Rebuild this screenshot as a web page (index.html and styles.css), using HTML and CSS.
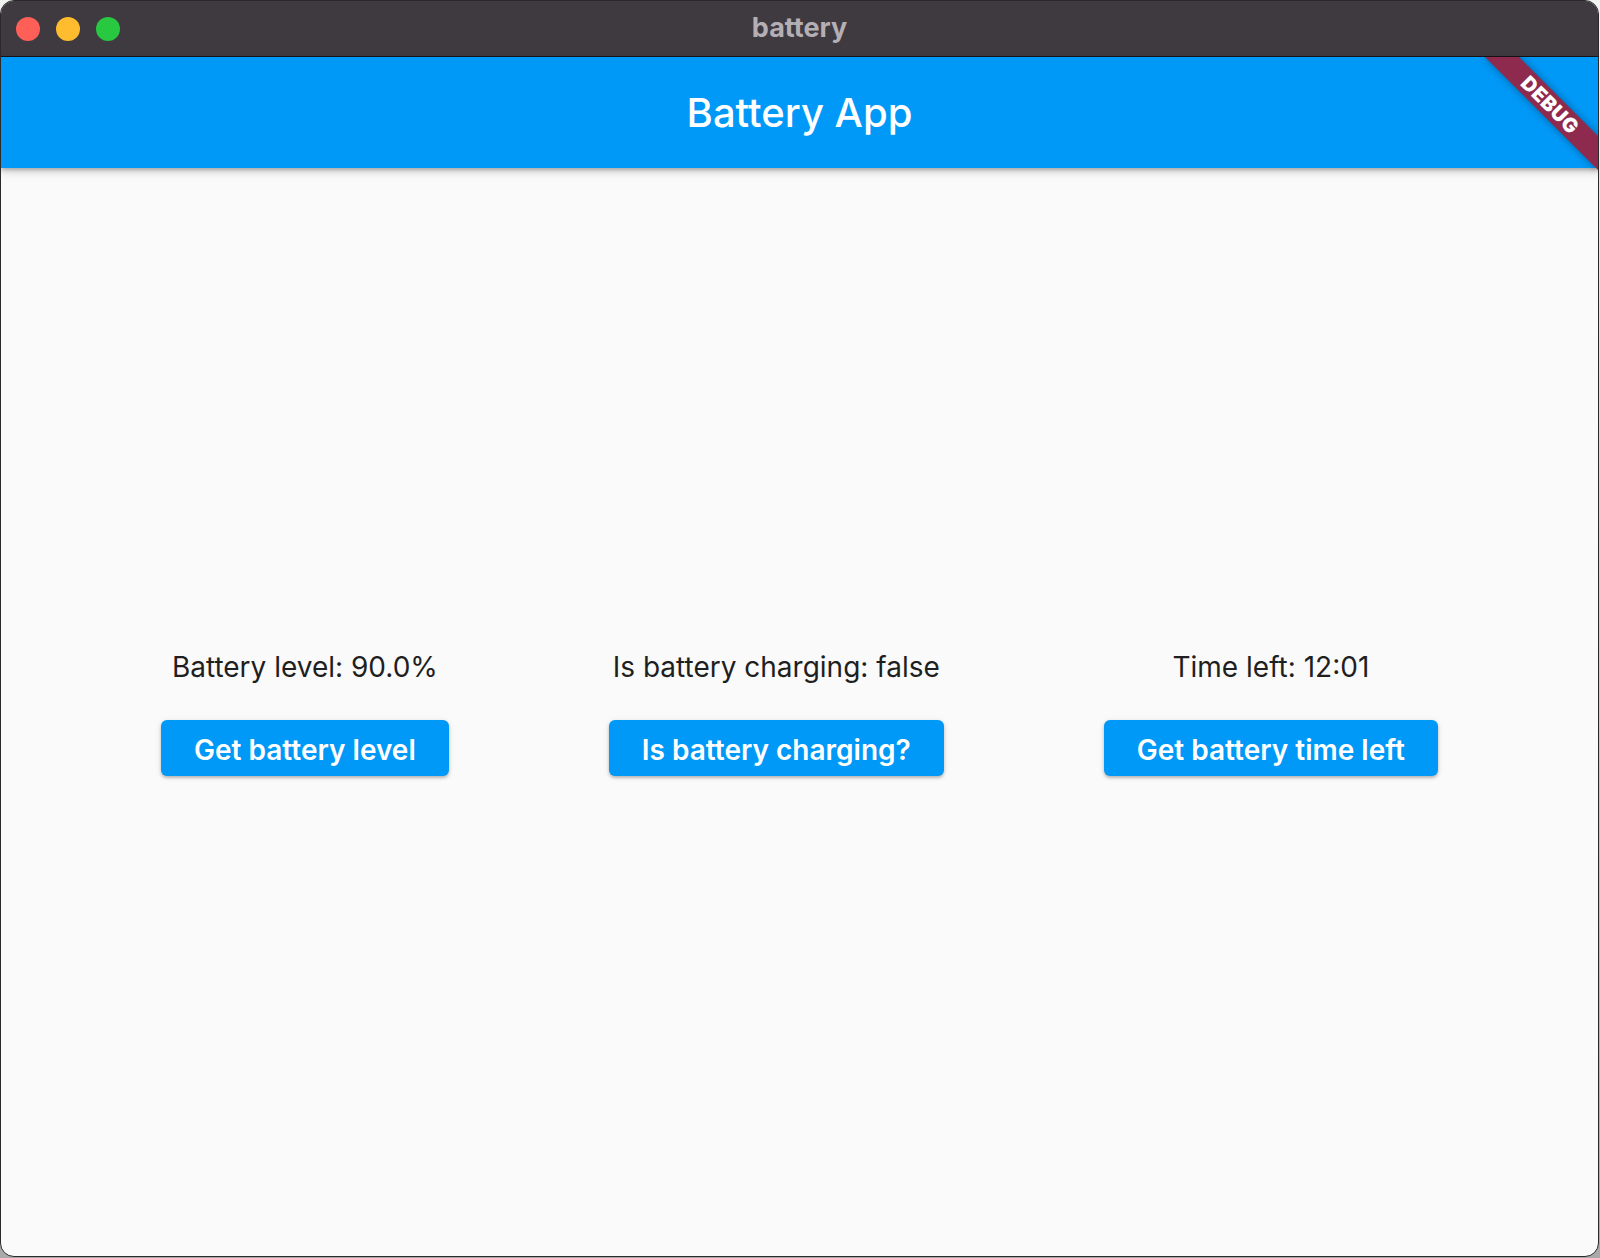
FILE: index.html
```html
<!DOCTYPE html>
<html lang="en">
<head>
<meta charset="utf-8">
<title>battery</title>
<link rel="stylesheet" href="styles.css">
</head>
<body>
<div class="window">
  <header class="titlebar">
    <div class="lights">
      <span class="light red"></span>
      <span class="light yellow"></span>
      <span class="light green"></span>
    </div>
    <div class="window-title">battery</div>
  </header>
  <div class="app">
    <div class="appbar">
      <h1 class="appbar-title">Battery App</h1>
    </div>
    <main class="content">
      <div class="row">
        <div class="col">
          <p class="value">Battery level: 90.0%</p>
          <button class="btn">Get battery level</button>
        </div>
        <div class="col">
          <p class="value">Is battery charging: false</p>
          <button class="btn">Is battery charging?</button>
        </div>
        <div class="col">
          <p class="value">Time left: 12:01</p>
          <button class="btn">Get battery time left</button>
        </div>
      </div>
    </main>
    <div class="banner-clip">
      <div class="banner">DEBUG</div>
    </div>
  </div>
</div>
</body>
</html>
```
FILE: styles.css
```css
* { box-sizing: border-box; }
html, body {
  margin: 0;
  height: 100%;
}
body {
  background: linear-gradient(#f2f2f2, #a9a9a9);
  font-family: Inter, "Noto Sans", sans-serif;
  overflow: hidden;
}
.window {
  width: 1599px;
  height: 1257px;
  border: 1px solid #2a2a2a;
  border-radius: 14px;
  overflow: hidden;
  display: flex;
  flex-direction: column;
  background: #fafafa;
}
.titlebar {
  height: 56px;
  flex: none;
  background: #3f3a40;
  border-bottom: 1px solid #161416;
  display: flex;
  align-items: center;
  position: relative;
}
.lights {
  display: flex;
  gap: 16px;
  padding-left: 15px;
}
.light {
  width: 24px;
  height: 24px;
  border-radius: 50%;
}
.red { background: #fe5f57; }
.yellow { background: #febc2e; }
.green { background: #28c840; }
.window-title {
  position: absolute;
  left: 0;
  right: 0;
  top: 0;
  height: 55px;
  line-height: 53px;
  text-align: center;
  color: #b4afb5;
  font-weight: 700;
  font-size: 27px;
}
.app {
  flex: 1;
  display: flex;
  flex-direction: column;
  position: relative;
}
.appbar {
  height: 111px;
  flex: none;
  background: #0099f7;
  display: flex;
  align-items: center;
  justify-content: center;
  box-shadow: 0 2px 4px rgba(0,0,0,0.25), 0 4px 10px rgba(0,0,0,0.14);
  position: relative;
  z-index: 1;
}
.appbar-title {
  margin: 0;
  color: #fff;
  font-size: 40px;
  font-weight: 500;
  line-height: 48px;
}
.content {
  flex: 1;
  display: flex;
  flex-direction: column;
  justify-content: center;
  padding-top: 3px;
}
.row {
  display: flex;
  justify-content: space-evenly;
}
.col {
  display: flex;
  flex-direction: column;
  align-items: center;
}
.value {
  margin: 0 0 37px;
  font-size: 28px;
  line-height: 32px;
  color: #1f1f1f;
  white-space: nowrap;
}
.btn {
  height: 56px;
  border: none;
  border-radius: 6px;
  background: #0099f7;
  color: #fff;
  font-family: Inter, "Noto Sans", sans-serif;
  font-size: 28px;
  font-weight: 600;
  padding: 3px 33px 0;
  box-shadow: 0 2px 3px rgba(0,0,0,0.22), 0 1px 6px rgba(0,0,0,0.1);
  white-space: nowrap;
}
.banner-clip {
  position: absolute;
  top: 0;
  right: 0;
  width: 160px;
  height: 160px;
  overflow: hidden;
  z-index: 2;
  pointer-events: none;
}
.banner {
  position: absolute;
  left: 32px;
  top: 36px;
  width: 160px;
  height: 24px;
  background: #8f2a4f;
  color: #fff;
  font-weight: 900;
  font-size: 20px;
  line-height: 24px;
  text-align: center;
  letter-spacing: 0.5px;
  transform: rotate(45deg);
  box-shadow: 0 0 8px rgba(0,0,0,0.35);
}
```
